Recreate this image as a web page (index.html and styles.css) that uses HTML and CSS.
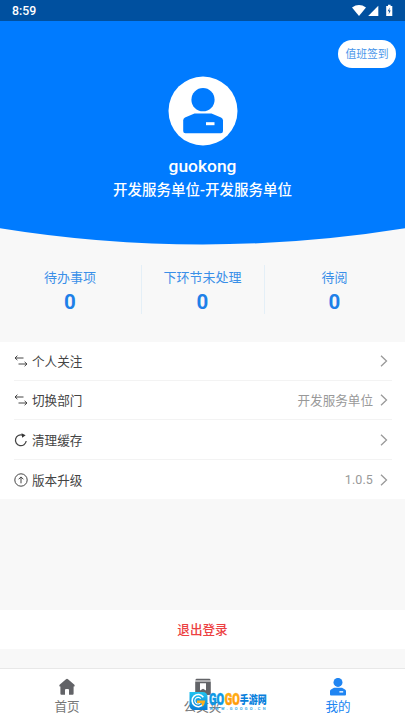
FILE: index.html
```html
<!DOCTYPE html>
<html lang="zh-CN">
<head>
<meta charset="utf-8">
<title>我的</title>
<link rel="stylesheet" href="styles.css">
</head>
<body>
<div class="status">
  <span>8:59</span>
  <svg width="42" height="14" viewBox="0 0 42 14" fill="#fff">
    <path d="M0 3.4Q7-1.5 14 3.4L7 12z"/>
    <path d="M26.3 1.8V11.9H16.2z"/>
    <path d="M36 .8h2.6v1.1H40.3v10H34.2v-10H36z"/>
    <path d="M37.7 3.5L35.7 7.3h1.4l-.4 3 2-3.9h-1.4z" fill="#00509f"/>
  </svg>
</div>
<header class="hero">
  <div class="sign-row"><button class="sign">值班签到</button></div>
  <svg class="avatar" width="70" height="70" viewBox="0 0 70 70">
    <circle cx="35" cy="35" r="34.5" fill="#fff"/>
    <circle cx="35" cy="23.7" r="11.6" fill="#007bff"/>
    <path d="M26.5 37.5H43.5L53 41.6Q55 42.6 55 44.5V55Q55 57.3 52.8 57.3H17.4Q15.2 57.3 15.2 55V44.5Q15.2 42.6 17 41.6z" fill="#007bff"/>
    <rect x="38" y="46.2" width="8.5" height="3" fill="#fff"/>
  </svg>
  <div class="name">guokong</div>
  <div class="dept">开发服务单位-开发服务单位</div>
</header>
<svg class="curve" width="405" height="17" viewBox="0 0 405 17"><path d="M0 0H405V.2Q202.5 32.8 0 .2z" fill="#007bff"/></svg>
<section class="stats">
  <div class="stat"><span>待办事项</span><b>0</b></div>
  <div class="stat"><span>下环节未处理</span><b>0</b></div>
  <div class="stat"><span>待阅</span><b>0</b></div>
</section>
<ul class="menu">
  <li>
    <svg class="icon" viewBox="0 0 14 14"><path d="M3.4 1.7L1 4l2.4 2.1M1 4H9.5M4.5 10H13M10.6 7.9L13 10l-2.4 2.2"/></svg>
    <span class="label">个人关注</span>
    <svg class="arrow" viewBox="0 0 8 12"><path d="M1 .8L6.5 6 1 11.2"/></svg>
  </li>
  <li>
    <svg class="icon" viewBox="0 0 14 14"><path d="M3.4 1.7L1 4l2.4 2.1M1 4H9.5M4.5 10H13M10.6 7.9L13 10l-2.4 2.2"/></svg>
    <span class="label">切换部门</span><span class="value">开发服务单位</span>
    <svg class="arrow" viewBox="0 0 8 12"><path d="M1 .8L6.5 6 1 11.2"/></svg>
  </li>
  <li>
    <svg class="icon" viewBox="0 0 14 14"><path class="bold" d="M8.5 2.1A5.4 5.4 0 1 0 12.2 8"/><path class="solid" d="M7.5.2L11.6 2.2 8.2 4.8z"/></svg>
    <span class="label">清理缓存</span>
    <svg class="arrow" viewBox="0 0 8 12"><path d="M1 .8L6.5 6 1 11.2"/></svg>
  </li>
  <li>
    <svg class="icon" viewBox="0 0 14 14"><circle cx="7" cy="7" r="6.2"/><path d="M7 10.3V4M4.6 6.3L7 3.9l2.4 2.4"/></svg>
    <span class="label">版本升级</span><span class="value version">1.0.5</span>
    <svg class="arrow" viewBox="0 0 8 12"><path d="M1 .8L6.5 6 1 11.2"/></svg>
  </li>
</ul>
<button class="logout">退出登录</button>
<nav class="tabs">
  <div class="tab">
    <svg width="18" height="18" viewBox="0 0 18 18"><path d="M9 .7Q9.5.7 10 1.2L16.4 6.8Q17 7.5 16.4 8.4H15.6V15.7Q15.6 16.7 14.6 16.7H11V12Q11 11 10 11H8Q7 11 7 12V16.7H3.4Q2.4 16.7 2.4 15.7V8.4H1.6Q1 7.5 1.6 6.8L8 1.2Q8.5.7 9 .7z" fill="#626367"/></svg>
    <span>首页</span>
  </div>
  <div class="tab">
    <svg width="18" height="18" viewBox="0 0 18 18"><path d="M2.5.7H15.5Q16.5.7 16.7 2.5H1.3Q1.5.7 2.5.7zM1.2 3.6H16.8V16Q16.8 17 15.8 17H2.2Q1.2 17 1.2 16zM6 5.2V12.5L9 10.7 12 12.5V5.2z" fill="#626367" fill-rule="evenodd"/></svg>
    <span>公文夹</span>
  </div>
  <div class="tab active">
    <svg width="18" height="18" viewBox="0 0 18 18" fill="#2085f2"><circle cx="9" cy="4.4" r="4.5"/><path d="M5 9.8H13L16 11.4Q17 12 17 13V16.4Q17 17.5 16 17.5H2Q1 17.5 1 16.4V13Q1 12 2 11.4z"/><rect x="10.4" y="13.2" width="3.8" height="1.3" fill="#fff"/></svg>
    <span>我的</span>
  </div>
  <svg class="watermark" width="80" height="20" viewBox="0 0 80 20">
    <defs>
      <linearGradient id="logo" x2="0" y2="1"><stop stop-color="#22c4ef"/><stop offset="1" stop-color="#087bd5"/></linearGradient>
      <linearGradient id="gold" x2="0" y2="1"><stop stop-color="#ffb916"/><stop offset="1" stop-color="#ff8d00"/></linearGradient>
    </defs>
    <path d="M.5 0H13.5Q18.5 0 18.5 5V18H5.5Q.5 18 .5 13z" fill="url(#logo)"/>
    <path d="M14.3 5.2A6.1 6.1 0 1 0 14.6 11.5" fill="none" stroke="#fff" stroke-width="1.6"/>
    <path d="M11.7 6.6A3.3 3.3 0 1 0 11.3 11.2" fill="none" stroke="#fff" stroke-width="1.1"/>
    <path d="M8 8.5H16.3Q15.7 12.7 13.5 14.7L12.4 11H8z" fill="#ffae19"/>
    <text class="go blue" x="20" y="13.3" textLength="15" lengthAdjust="spacingAndGlyphs">GO</text>
    <text class="go gold" x="35.7" y="13.3" textLength="15" lengthAdjust="spacingAndGlyphs">GO</text>
    <text class="game" transform="translate(50.8 12.4) scale(1 1.3)">手游网</text>
    <text class="site" x="20.5" y="17.8" textLength="56">WWW.GOOGO.CN</text>
  </svg>
</nav>
</body>
</html>
```
FILE: styles.css
```css
* { box-sizing: border-box; }
body {
  margin: 0;
  width: 405px;
  height: 720px;
  overflow: hidden;
  display: flex;
  flex-direction: column;
  background: #f8f8f8;
  font-family: Roboto, "Noto Sans CJK SC", sans-serif;
  font-size: 12.6px;
  color: #444;
}
button { border: 0; padding: 0; font: inherit; }
svg { display: block; flex: none; }
.status {
  flex: none;
  height: 21px;
  padding: 0 12px;
  display: flex;
  align-items: center;
  justify-content: space-between;
  background: #00509f;
  color: #fff;
  font-size: 12.3px;
  font-weight: 500;
}
.status svg { margin-right: -.5px; }
.hero {
  flex: none;
  height: 207px;
  display: flex;
  flex-direction: column;
  align-items: center;
  background: #007bff;
  color: #fff;
}
.sign-row {
  align-self: stretch;
  display: flex;
  justify-content: flex-end;
  padding: 18.5px 9px 0 0;
}
.sign {
  width: 58px;
  height: 28px;
  padding-bottom: 2px;
  border-radius: 14px;
  background: #fff;
  color: #4996ea;
  font-size: 10.8px;
}
.avatar { margin-top: 8.5px; }
.name {
  margin-top: 9px;
  font-size: 17.4px;
  line-height: 22px;
  font-weight: 500;
}
.dept {
  margin-top: 3px;
  font-size: 14.5px;
  line-height: 22px;
  font-weight: 500;
}
.curve { margin-top: -.2px; }
.stats {
  flex: none;
  height: 49px;
  margin-top: 20px;
  display: grid;
  grid-template-columns: 141px 123px 141px;
  color: #3a8fe8;
}
.stat {
  display: flex;
  flex-direction: column;
  align-items: center;
  padding: 3px 1px 0 0;
  font-size: 13px;
  line-height: 20px;
}
.stat + .stat { border-left: 1px solid #e4eff7; }
.stat b {
  margin-top: 2px;
  font-size: 20.5px;
  line-height: 24px;
  font-weight: 700;
  color: #1e80e8;
}
.menu {
  flex: none;
  list-style: none;
  margin: 28px 0 0;
  padding: 0 13px 0 14px;
  background: #fff;
  height: 157px;
}
.menu li {
  height: 39.7px;
  padding-right: 4px;
  display: flex;
  align-items: center;
  border-bottom: 1px solid #f3f3f3;
}
.menu li:first-child { height: 38.7px; }
.menu li:last-child { border: 0; }
.icon {
  width: 14px;
  height: 14px;
  margin-right: 4px;
  fill: none;
  stroke: #444;
  stroke-width: 1;
}
.bold { stroke-width: 1.25; }
.solid { fill: #333; stroke: none; }
.label { flex: 1; margin-top: -1px; }
.value { margin-right: 7px; color: #999; }
.version { font-size: 12.5px; letter-spacing: .1px; }
.arrow {
  width: 8px;
  height: 12px;
  fill: none;
  stroke: #999;
  stroke-width: 1.3;
}
.logout {
  flex: none;
  height: 39px;
  padding-bottom: 2px;
  margin-top: 111px;
  background: #fff;
  color: #ec4042;
  font-weight: 500;
}
.tabs {
  position: relative;
  flex: none;
  height: 52px;
  margin-top: 19px;
  display: grid;
  grid-template-columns: 134px 137px 134px;
  background: #fff;
  border-top: 1px solid #e8e8e8;
}
.tab {
  display: flex;
  flex-direction: column;
  align-items: center;
  padding-top: 9.5px;
  line-height: 18px;
  color: #777;
}
.tab span { margin-top: 1.5px; }
.active { color: #2085f2; }
.watermark {
  position: absolute;
  left: 189px;
  top: 23px;
}
.go {
  font: 900 16px Roboto, sans-serif;
  stroke-width: .5px;
}
.blue { fill: #0c98e6; stroke: #0c98e6; }
.gold { fill: url(#gold); stroke: #ff9d0a; }
.game {
  font: 900 9px "Noto Sans CJK SC", sans-serif;
  fill: #087fdc;
}
.site {
  font: 700 4px Roboto, sans-serif;
  fill: #43aee9;
}
```
